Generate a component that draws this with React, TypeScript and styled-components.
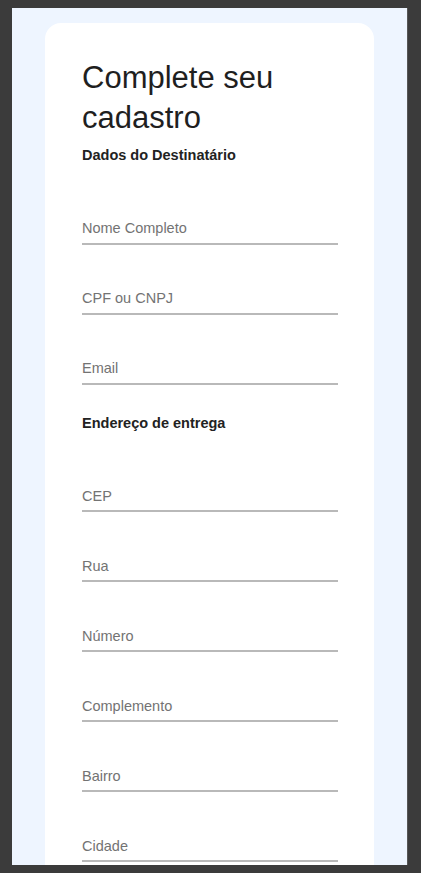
import React from "react";
import styled, { createGlobalStyle } from "styled-components";

const GlobalStyle = createGlobalStyle`
  html {
    background: #3b3b3b;
  }
  body {
    margin: 8px 13px 8px 12px;
    font-family: "Liberation Sans", Arial, sans-serif;
  }
`;

const Screen = styled.div`
  height: calc(100vh - 16px);
  background: #eef5ff;
  overflow: hidden;
  box-sizing: border-box;
  padding: 15px 33px 0 33px;
  border-right: 1px solid #565656;
`;

const Card = styled.div`
  background: #ffffff;
  border-radius: 16px;
  padding: 35px 36px 40px 37px;
  box-sizing: border-box;
`;

const Title = styled.h1`
  margin: 0;
  font-size: 31px;
  line-height: 40px;
  font-weight: 400;
  color: #1f1f1f;
`;

const SectionTitle = styled.h2<{ $top: number }>`
  margin: ${(p) => p.$top}px 0 11px;
  font-size: 14.5px;
  line-height: 16.7px;
  font-weight: 700;
  color: #222222;
`;

const Field = styled.div`
  padding-top: 41px;
`;

const Input = styled.input`
  display: block;
  width: 100%;
  box-sizing: border-box;
  border: none;
  border-bottom: 2px solid #b9b9b9;
  background: transparent;
  padding: 4px 0 6px;
  font-family: "Liberation Sans", Arial, sans-serif;
  font-size: 14.5px;
  line-height: 17px;
  height: 29px;
  color: #222;
  outline: none;
  &::placeholder {
    color: #737373;
    opacity: 1;
  }
`;

const recipient = ["Nome Completo", "CPF ou CNPJ", "Email"];
const address = ["CEP", "Rua", "Número", "Complemento", "Bairro", "Cidade", "Estado"];

export default function App() {
  return (
    <>
      <GlobalStyle />
      <Screen>
        <Card>
          <Title>Complete seu cadastro</Title>
          <SectionTitle $top={9}>Dados do Destinatário</SectionTitle>
          {recipient.map((p) => (
            <Field key={p}>
              <Input placeholder={p} />
            </Field>
          ))}
          <SectionTitle $top={30}>Endereço de entrega</SectionTitle>
          {address.map((p) => (
            <Field key={p}>
              <Input placeholder={p} />
            </Field>
          ))}
        </Card>
      </Screen>
    </>
  );
}
